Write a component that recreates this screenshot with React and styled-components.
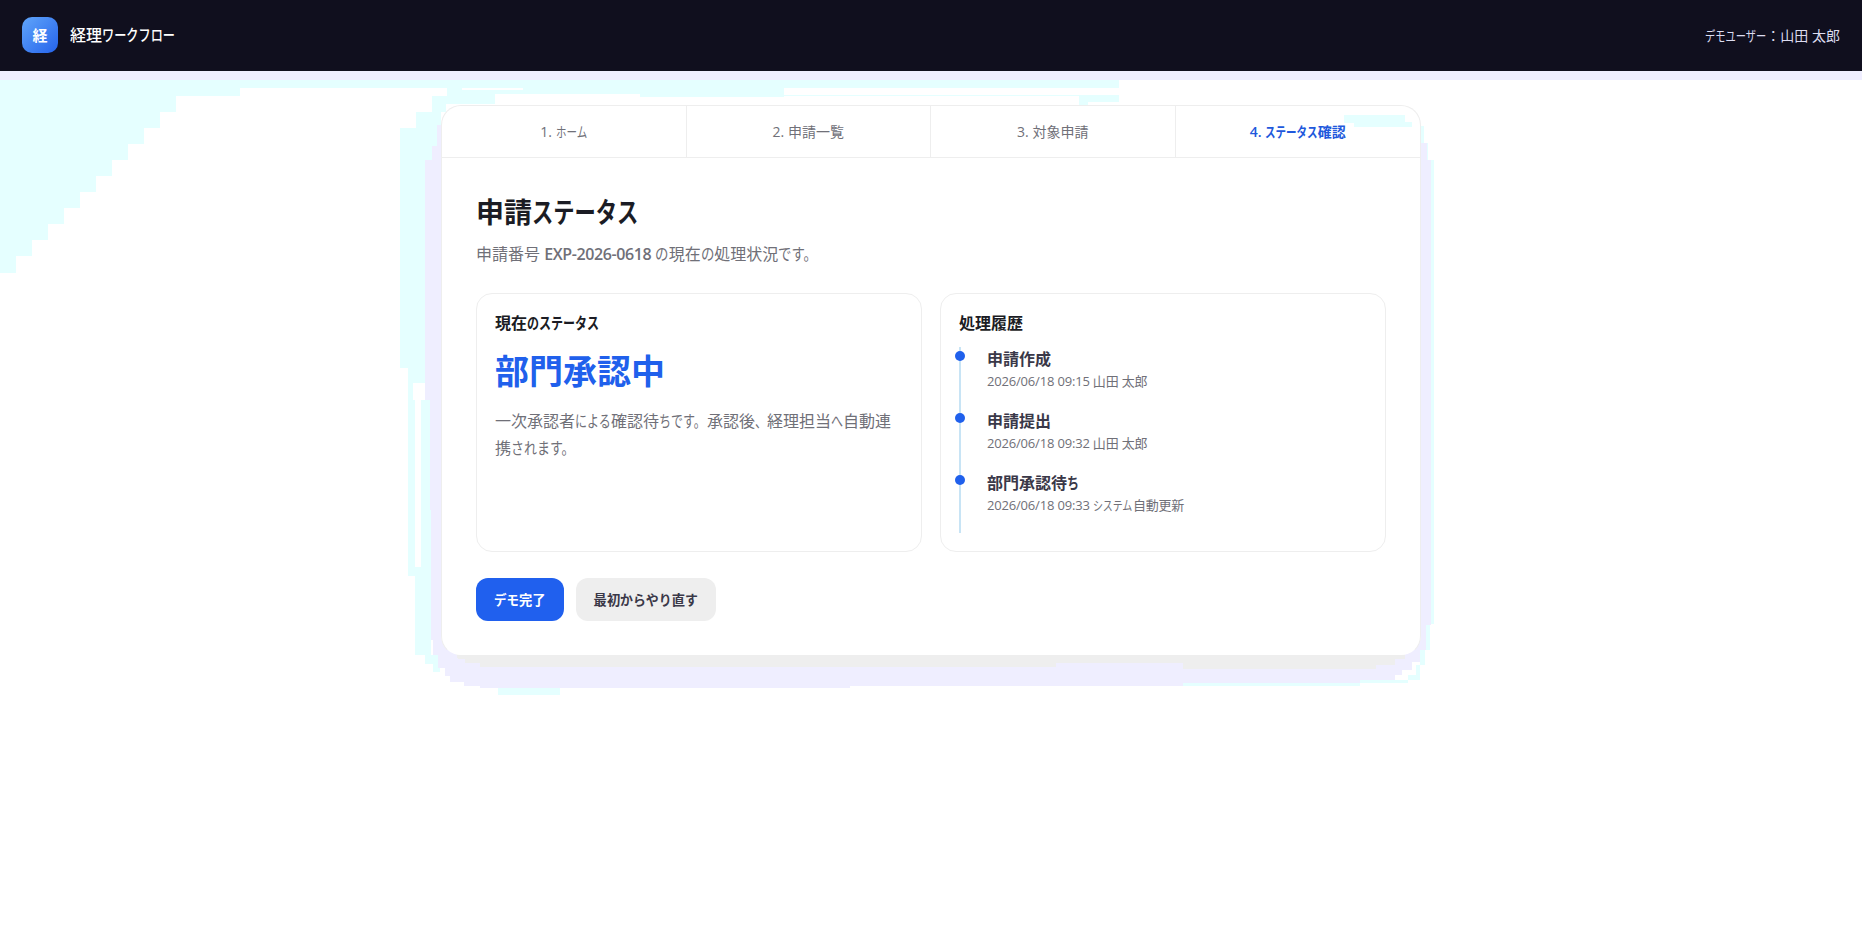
import styled, {createGlobalStyle} from 'styled-components';

const GlobalStyle = createGlobalStyle`
  * {
    box-sizing: border-box;
  }
  body {
    margin: 0;
    background: #fff;
    color: #1b1c24;
    font-family: "Open Sans", "Noto Sans CJK JP", sans-serif;
    font-size: 16px;
  }
`;

const Page = styled.div`
  height: 952px;
  overflow: hidden;
  position: relative;
`;

const Backdrop = styled.svg`
  left: 0;
  position: absolute;
  top: 0;
  z-index: -1;
`;

const Header = styled.header`
  align-items: center;
  background: #100f1e;
  box-shadow: 0 9px 0 #efeeff;
  color: #fff;
  display: flex;
  height: 71px;
  justify-content: space-between;
  padding: 0 22px 1px;
`;

const Brand = styled.div`
  align-items: center;
  display: flex;
  font-weight: 500;
  gap: 12px;
  line-height: 24px;
`;

const Logo = styled.div`
  background: linear-gradient(135deg, #60a5fa, #2563eb);
  border-radius: 10px;
  font-size: 15px;
  font-weight: 600;
  height: 36px;
  line-height: 36px;
  text-align: center;
  width: 36px;
`;

const User = styled.div`
  color: #dcdcf0;
  font-size: 14px;
`;

const Card = styled.main`
  border: 1px solid #eee;
  border-bottom-color: transparent;
  border-radius: 20px;
  height: 551px;
  margin: 34px auto 0;
  width: 980px;
`;

const Tabs = styled.nav`
  border-bottom: 1px solid #eee;
  display: grid;
  grid-template-columns: repeat(4, 1fr);
  height: 52px;
`;

const Tab = styled.div`
  border-right: ${({$active}) => ($active ? 'none' : '1px solid #eee')};
  color: ${({$active}) => ($active ? '#2158dc' : '#707078')};
  font-size: 14px;
  font-weight: ${({$active}) => ($active ? 600 : 400)};
  line-height: 51px;
  text-align: center;
`;

const Content = styled.div`
  padding: 34px;
`;

const Title = styled.h1`
  font-size: 28px;
  font-weight: 700;
  line-height: 40px;
  margin: 0;
`;

const Lead = styled.p`
  color: #707078;
  line-height: 26px;
  margin: 9px 0 26px;
`;

const RequestNo = styled.strong`
  font-weight: 600;
  letter-spacing: -0.4px;
`;

const Panels = styled.div`
  display: grid;
  gap: 18px;
  grid-template-columns: 1fr 1fr;
`;

const Panel = styled.section`
  border: 1px solid #eee;
  border-radius: 16px;
  height: 259px;
  padding: 17px 18px;
`;

const PanelTitle = styled.h3`
  font-size: 16px;
  font-weight: 600;
  line-height: 24px;
  margin: 0;
`;

const Status = styled.div`
  color: #2060ec;
  font-size: 34px;
  font-weight: 700;
  line-height: 50px;
  margin: 11px 0 12px;
`;

const Note = styled.p`
  color: #707078;
  line-height: 27px;
  margin: 0;
`;

const Timeline = styled.ul`
  border-left: 2px solid #c8e4f5;
  display: flex;
  flex-direction: column;
  gap: 16px;
  height: 186px;
  list-style: none;
  margin: 12px 0 0;
  padding: 0 0 0 26px;
`;

const Event = styled.li`
  height: 46px;
  position: relative;
  &::before {
    background: #2060ec;
    border-radius: 50%;
    content: "";
    height: 10px;
    left: -32px;
    position: absolute;
    top: 4px;
    width: 10px;
  }
`;

const EventName = styled.div`
  color: #3a3848;
  font-weight: 600;
  line-height: 24px;
`;

const EventMeta = styled.div`
  color: #707078;
  font-size: 13px;
  letter-spacing: -0.18px;
  line-height: 20px;
`;

const Actions = styled.div`
  display: flex;
  gap: 12px;
  margin-top: 26px;
`;

const Button = styled.button`
  background: ${({$primary}) => ($primary ? '#2060ee' : '#eee')};
  border: none;
  border-radius: 12px;
  color: ${({$primary}) => ($primary ? '#fff' : '#3a3848')};
  font-family: inherit;
  font-size: 13.3px;
  font-weight: 600;
  height: 43px;
  padding: 0 18px;
  white-space: nowrap;
`;

const Narrow = styled.span`
  display: inline-block;
  transform: scaleX(${({$ratio}) => $ratio});
  transform-origin: left;
  white-space: nowrap;
  width: ${({$ratio, $count}) => $ratio * $count}em;
`;

const Kana = ({children, ratio = 0.75}) =>
  children.split(/([\u3001\u3002\u3041-\u30ff]+)/).map((part, i) =>
    i % 2 ? (
      <Narrow key={i} $ratio={ratio} $count={part.length}>{part}</Narrow>
    ) : part
  );

const tabs = ['1. ホーム', '2. 申請一覧', '3. 対象申請', '4. ステータス確認'];

const events = [
  {name: '申請作成', meta: '2026/06/18 09:15 山田 太郎'},
  {name: '申請提出', meta: '2026/06/18 09:32 山田 太郎'},
  {name: '部門承認待ち', meta: '2026/06/18 09:33 システム自動更新'},
];

// Stepped tint in the corner and the flat shadow bands round the card
const Scenery = () => (
  <Backdrop width="1862" height="952" shapeRendering="crispEdges">
    <g fill="#e5ffff">
      <path d="M0 80H1119V88H784V97H640V94H495V104H446V112H441V160H425V368H431V655H440V672H433V664H425V655H415V576H408V368H400V128H416V112H432V96H447V88H240V96H176V112H160V128H144V144H128V160H112V176H96V192H80V208H64V224H48V240H32V256H16V273H0Z" />
      <path d="M784 95H1119V102H1088V105H1079V96H784Z" />
      <path d="M1420 126H1424V143H1428V160H1434V624H1430V650H1425V665H1416V675H1408V683H1360V686H1183V680H1420Z" />
      <path d="M480 685H560V695H498V688H480Z" />
    </g>
    <path fill="#fff" d="M413 383H425V400H421V567H415V400H413ZM462 88H523V90H462Z" />
    <path fill="#efeeff" d="M441 125H437V146H432V160H425V400H430V510H431V640H433V655H438V668H445V676H450V682H464V686H480V688H850V686H1183V683H1360V680H1395V675H1402V670H1412V662H1420V650H1426V625H1431V160H1427V143H1421V126Z" />
    <path fill="#eee" d="M455 650H1405V659H1395V665H1376V669H1183V663H1056V667H480V663H465V659H458Z" />
    <rect x="441" y="105" width="980" height="550" rx="20" fill="#fff" shapeRendering="auto" />
    <path fill="#e5ffff" d="M1344 115H1405V122H1412V127H1354V123H1344Z" />
  </Backdrop>
);

const App = () => (
  <>
    <GlobalStyle />
    <Page>
      <Scenery />
      <Header>
        <Brand>
          <Logo>経</Logo>
          <span><Kana ratio={0.76}>経理ワークフロー</Kana></span>
        </Brand>
        <User><Kana ratio={0.73}>デモユーザー</Kana>：山田 太郎</User>
      </Header>
      <Card>
        <Tabs>
          {tabs.map((tab, i) => (
            <Tab key={tab} $active={i === 3}><Kana>{tab}</Kana></Tab>
          ))}
        </Tabs>
        <Content>
          <Title><Kana ratio={0.76}>申請ステータス</Kana></Title>
          <Lead>
            申請番号 <RequestNo>EXP-2026-0618</RequestNo> <Kana ratio={0.84}>の現在の処理状況です。</Kana>
          </Lead>
          <Panels>
            <Panel>
              <PanelTitle><Kana>現在のステータス</Kana></PanelTitle>
              <Status>部門承認中</Status>
              <Note>
                <Kana>一次承認者による確認待ちです。承認後、経理担当へ自動連</Kana>
                <br />
                <Kana ratio={0.81}>携されます。</Kana>
              </Note>
            </Panel>
            <Panel>
              <PanelTitle>処理履歴</PanelTitle>
              <Timeline>
                {events.map((event) => (
                  <Event key={event.name}>
                    <EventName><Kana>{event.name}</Kana></EventName>
                    <EventMeta><Kana ratio={0.77}>{event.meta}</Kana></EventMeta>
                  </Event>
                ))}
              </Timeline>
            </Panel>
          </Panels>
          <Actions>
            <Button $primary><Kana ratio={0.94}>デモ完了</Kana></Button>
            <Button><Kana ratio={0.97}>最初からやり直す</Kana></Button>
          </Actions>
        </Content>
      </Card>
    </Page>
  </>
);

export default App;
